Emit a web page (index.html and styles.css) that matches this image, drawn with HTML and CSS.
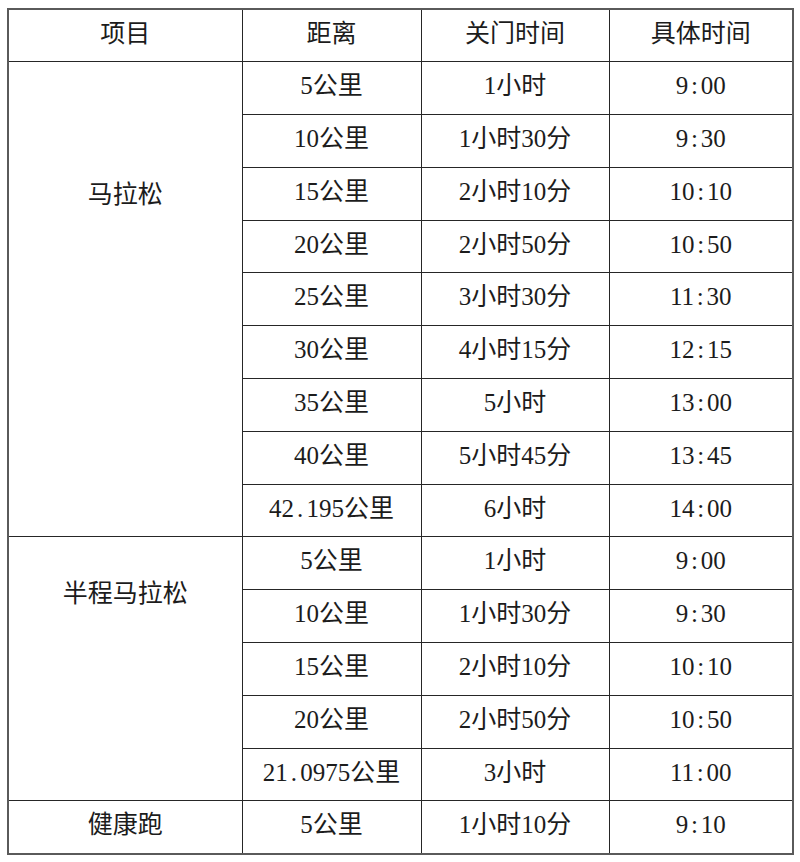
FILE: index.html
```html
<!DOCTYPE html>
<html lang="zh-CN">
<head>
<meta charset="utf-8">
<title>关门时间</title>
<link rel="stylesheet" href="styles.css">
</head>
<body>
<table class="sched">
  <colgroup>
    <col class="c1"><col class="c2"><col class="c3"><col class="c4">
  </colgroup>
  <thead>
    <tr><th>项目</th><th>距离</th><th>关门时间</th><th>具体时间</th></tr>
  </thead>
  <tbody>
    <tr><td rowspan="9" class="event ev-full">马拉松</td><td>5公里</td><td>1小时</td><td>9<span class="p">:</span>00</td></tr>
    <tr><td>10公里</td><td>1小时30分</td><td>9<span class="p">:</span>30</td></tr>
    <tr><td>15公里</td><td>2小时10分</td><td>10<span class="p">:</span>10</td></tr>
    <tr><td>20公里</td><td>2小时50分</td><td>10<span class="p">:</span>50</td></tr>
    <tr><td>25公里</td><td>3小时30分</td><td>11<span class="p">:</span>30</td></tr>
    <tr><td>30公里</td><td>4小时15分</td><td>12<span class="p">:</span>15</td></tr>
    <tr><td>35公里</td><td>5小时</td><td>13<span class="p">:</span>00</td></tr>
    <tr><td>40公里</td><td>5小时45分</td><td>13<span class="p">:</span>45</td></tr>
    <tr><td>42<span class="p">.</span>195公里</td><td>6小时</td><td>14<span class="p">:</span>00</td></tr>
    <tr><td rowspan="5" class="event ev-half">半程马拉松</td><td>5公里</td><td>1小时</td><td>9<span class="p">:</span>00</td></tr>
    <tr><td>10公里</td><td>1小时30分</td><td>9<span class="p">:</span>30</td></tr>
    <tr><td>15公里</td><td>2小时10分</td><td>10<span class="p">:</span>10</td></tr>
    <tr><td>20公里</td><td>2小时50分</td><td>10<span class="p">:</span>50</td></tr>
    <tr><td>21<span class="p">.</span>0975公里</td><td>3小时</td><td>11<span class="p">:</span>00</td></tr>
    <tr><td class="event">健康跑</td><td>5公里</td><td>1小时10分</td><td>9<span class="p">:</span>10</td></tr>
  </tbody>
</table>
</body>
</html>
```

FILE: styles.css
```css
html, body {
  background: #ffffff;
}
body {
  margin: 8px 0 0 7px;
  font-family: "Liberation Serif", "Noto Sans CJK SC", serif;
  color: #1c1c1c;
}
.sched {
  border-collapse: collapse;
  width: 785px;
  table-layout: fixed;
  border: 2px solid #5a5a5a;
  font-size: 25px;
}
.c1 { width: 234px; }
.c2 { width: 179px; }
.c3 { width: 188px; }
.c4 { width: 184px; }
.sched tr {
  height: 52.8px;
}
.sched th,
.sched td {
  border: 1px solid #262626;
  padding: 0 0 4px 0;
  text-align: center;
  vertical-align: middle;
  font-weight: normal;
  line-height: 30px;
  white-space: nowrap;
}
.sched thead th {
  border-bottom: 1px solid #262626;
}
.p {
  display: inline-block;
  width: 0.5em;
  text-align: center;
}
.sched td.event {
  vertical-align: top;
}
.sched td.ev-full {
  padding-top: 118px;
}
.sched td.ev-half {
  padding-top: 42px;
}
.sched tr:last-child td.event {
  vertical-align: middle;
  padding-top: 0;
}
```
